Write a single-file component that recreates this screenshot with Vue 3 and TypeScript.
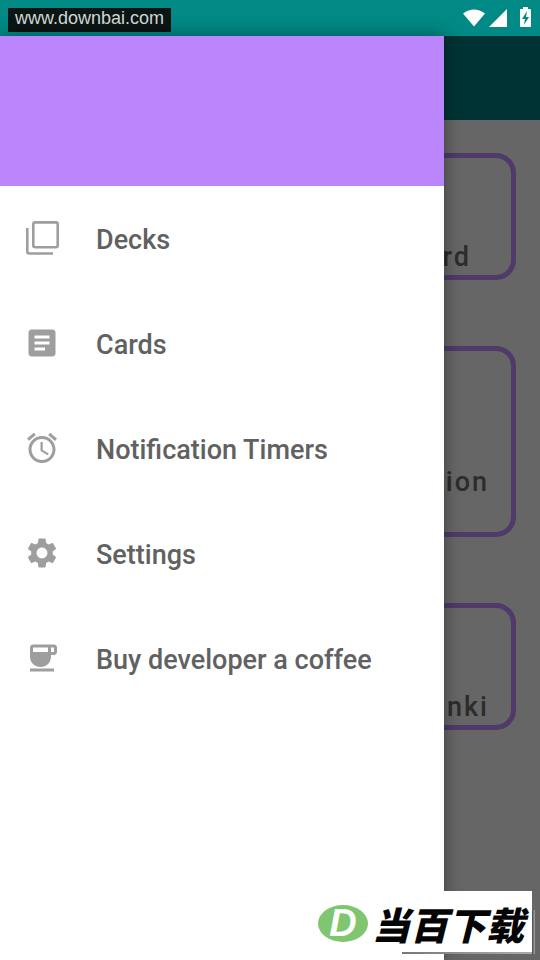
<script setup lang="ts">
interface NavItem {
  label: string
  outlined?: boolean
  path: string
}

interface DeckCard {
  label: string
  size: 'short' | 'tall'
  inset?: boolean
}

const items: NavItem[] = [
  {
    label: 'Decks',
    outlined: true,
    path: 'M13.300 4.400H33.700Q35.700 4.400 35.700 6.400V27.300Q35.700 29.300 33.700 29.300H13.300Q11.300 29.300 11.300 27.300V6.400Q11.300 4.400 13.300 4.400zM5.300 10V33.500Q5.300 35.500 7.300 35.500H31',
  },
  {
    label: 'Cards',
    path: 'M19 3H5c-1.100 0-2 .9-2 2v14c0 1.100.9 2 2 2h14c1.100 0 2-.9 2-2V5c0-1.100-.9-2-2-2zm-5 14H7v-2h7v2zm3-4H7v-2h10v2zm0-4H7V7h10v2z',
  },
  {
    label: 'Notification Timers',
    path: 'M22 5.720l-4.600-3.860-1.290 1.530 4.600 3.860L22 5.720zM7.880 3.390L6.600 1.860 2 5.710l1.290 1.530 4.590-3.850zM12.500 8H11v6l4.750 2.850.75-1.230-4-2.370V8zM12 4c-4.970 0-9 4.030-9 9s4.020 9 9 9c4.970 0 9-4.030 9-9s-4.030-9-9-9zm0 16c-3.870 0-7-3.130-7-7s3.130-7 7-7 7 3.130 7 7-3.130 7-7 7z',
  },
  {
    label: 'Settings',
    path: 'M19.140 12.940c.04-.3.06-.61.06-.94 0-.32-.02-.64-.07-.94l2.030-1.580c.18-.14.23-.41.12-.61l-1.920-3.320c-.12-.22-.37-.29-.59-.22l-2.390.96c-.5-.38-1.030-.7-1.620-.94l-.36-2.540c-.04-.24-.24-.41-.48-.41h-3.840c-.24 0-.43.17-.47.41l-.36 2.540c-.59.24-1.130.57-1.620.94l-2.390-.96c-.22-.08-.47 0-.59.22L2.740 8.870c-.12.21-.08.47.12.61l2.030 1.580c-.05.3-.09.63-.09.94s.02.64.07.94l-2.030 1.580c-.18.14-.23.41-.12.61l1.920 3.320c.12.22.37.29.59.22l2.390-.96c.5.38 1.030.7 1.620.94l.36 2.540c.05.24.24.41.48.41h3.840c.24 0 .44-.17.47-.41l.36-2.540c.59-.24 1.130-.56 1.620-.94l2.390.96c.22.08.47 0 .59-.22l1.920-3.320c.12-.22.07-.47-.12-.61l-2.010-1.580zM12 15.600c-1.980 0-3.600-1.620-3.600-3.600s1.620-3.600 3.600-3.600 3.600 1.620 3.600 3.600-1.620 3.600-3.600 3.600z',
  },
  {
    label: 'Buy developer a coffee',
    path: 'M20 3H6c-1.100 0-2 .9-2 2v6c0 4 3 7 7 7s7-3 7-7v-1h2c1.110 0 2-.9 2-2V5c0-1.110-.89-2-2-2zm-4 5H6V5h10v3zm4 0h-2V5h2v3zM4 19h16v2H4v-2z',
  },
]

const cards: DeckCard[] = [
  { label: 'rd', size: 'short', inset: true },
  { label: 'ion', size: 'tall' },
  { label: 'nki', size: 'short' },
]
</script>

<template>
  <div class="screen">
    <header class="status">
      <span class="site">www.downbai.com</span>
      <svg class="signals" viewBox="0 0 72 24" aria-hidden="true">
        <path d="M3 7.500Q14 -.5 25 7.500L14 20.500z" />
        <path d="M47 3V21H29z" />
        <path fill-rule="evenodd" d="M60 3h3V1h5v2h2q1 0 1 1v16q0 1-1 1h-9q-1 0-1-1V4zM67 5l-5 8h3l-1 6 5-8h-3z" />
      </svg>
    </header>

    <div class="stage">
      <main class="page">
        <div class="toolbar"></div>
        <div class="cards">
          <button
            v-for="card in cards"
            :key="card.label"
            type="button"
            class="card"
            :class="[card.size, { inset: card.inset }]"
          >
            {{ card.label }}
          </button>
        </div>
      </main>

      <nav class="drawer" aria-label="Main">
        <div class="banner"></div>
        <ul class="menu">
          <li v-for="item in items" :key="item.label">
            <a href="#" class="entry">
              <span class="icon-box">
                <svg v-if="item.outlined" class="icon-outlined" viewBox="0 0 40 40" aria-hidden="true">
                  <path :d="item.path" />
                </svg>
                <svg v-else class="icon" viewBox="0 0 24 24" aria-hidden="true">
                  <path :d="item.path" />
                </svg>
              </span>
              <span class="entry-label">{{ item.label }}</span>
            </a>
          </li>
        </ul>
      </nav>
    </div>

    <div class="brand">
      <span class="badge">D</span>
      <span class="brand-name">当百下载</span>
    </div>
  </div>
</template>

<style>
body {
  margin: 0;
}
</style>

<style scoped>
.screen {
  position: relative;
  display: flex;
  flex-direction: column;
  min-height: 100vh;
  overflow: hidden;
  background: #666;
  font-family: Roboto, 'Noto Sans CJK SC', sans-serif;
}

.status {
  display: flex;
  align-items: center;
  justify-content: space-between;
  box-sizing: border-box;
  height: 36px;
  padding: 0 8px;
  background: #008985;
}

.site {
  margin-top: 4px;
  padding: 0 7px 4px;
  background: #0b1513;
  color: #d2d8d6;
  font: 18px/20px 'Liberation Sans', sans-serif;
}

.signals {
  width: 72px;
  height: 24px;
  fill: #fff;
}

.stage {
  position: relative;
  display: flex;
  flex: 1;
}

.page {
  flex: 1;
}

.toolbar {
  height: 84px;
  background: #003333;
}

.cards {
  display: flex;
  flex-direction: column;
  gap: 66px;
  padding: 33px 24px;
}

.card {
  display: flex;
  align-items: flex-end;
  justify-content: flex-end;
  box-sizing: border-box;
  width: 100%;
  padding: 0 22px 2px;
  border: 5px solid #4f3a6a;
  border-radius: 20px;
  background: none;
  color: #2c2c2c;
  font: 500 27px/32px Roboto, sans-serif;
  letter-spacing: 2px;
}

.short {
  height: 127px;
}

.tall {
  height: 191px;
  padding-bottom: 34px;
}

.inset {
  padding-right: 40px;
}

.drawer {
  position: absolute;
  inset: 0 96px 0 0;
  background: #fff;
  box-shadow: 0 0 16px rgba(0, 0, 0, 0.4);
}

.banner {
  height: 150px;
  background: #bb86fc;
}

.menu {
  margin: 0;
  padding: 0;
  list-style: none;
}

.entry {
  display: flex;
  align-items: center;
  gap: 36px;
  height: 105px;
  padding-left: 24px;
  color: #616161;
  font-size: 27px;
  font-weight: 500;
  line-height: 32px;
  text-decoration: none;
}

.entry-label {
  padding-top: 2px;
}

.icon-box {
  display: flex;
  align-items: center;
  justify-content: center;
  width: 36px;
  height: 36px;
  padding-bottom: 2px;
}

.icon {
  flex: none;
  width: 36px;
  height: 36px;
  fill: #9e9e9e;
}

.icon-outlined {
  flex: none;
  width: 40px;
  height: 40px;
  fill: none;
  stroke: #9e9e9e;
  stroke-width: 2.600;
}

.brand {
  position: absolute;
  right: 8px;
  bottom: 8px;
  display: flex;
  align-items: center;
  gap: 4px;
  box-sizing: border-box;
  height: 61px;
  padding: 4px 8px 0 4px;
  background: #fff;
}

.brand::before,
.brand::after {
  position: absolute;
  right: -3px;
  bottom: -2px;
  content: '';
}

.brand::before {
  left: 88px;
  height: 2px;
  background: linear-gradient(90deg, #777, #999 60%, #aaa);
}

.brand::after {
  top: 19px;
  width: 3px;
  background: linear-gradient(90deg, #444, #aaa);
}

.badge {
  width: 50px;
  height: 37px;
  border-radius: 50%;
  background: #80c670;
  color: #fff;
  font: italic 700 38px/37px 'Liberation Sans', sans-serif;
  text-align: center;
}

.brand-name {
  color: #050505;
  font: italic 900 38px/56px 'Noto Sans CJK SC', sans-serif;
}
</style>
